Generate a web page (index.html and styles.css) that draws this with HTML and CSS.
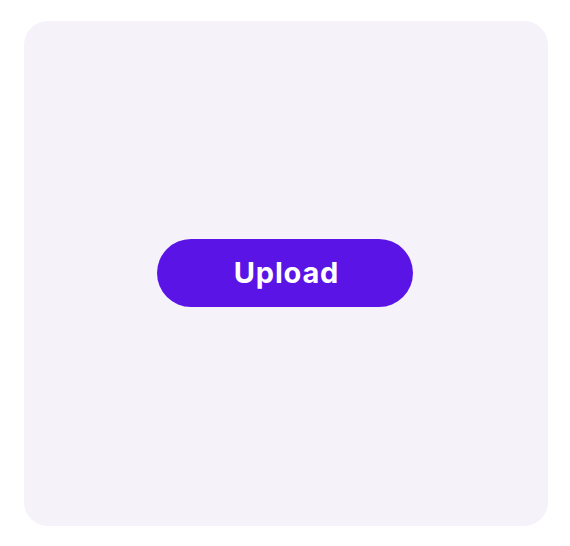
FILE: index.html
```html
<!DOCTYPE html>
<html>
<head>
<meta charset="utf-8">
<link rel="stylesheet" href="styles.css">
</head>
<body>
<div class="card">
  <button class="upload">Upload</button>
</div>
</body>
</html>
```
FILE: styles.css
```css
html, body {
  margin: 0;
  padding: 0;
  background: #ffffff;
}
body {
  padding: 21px 0 0 24px;
}
.card {
  width: 524px;
  height: 505px;
  border-radius: 24px;
  background: #f5f2fa;
  display: flex;
  align-items: center;
  justify-content: center;
}
.upload {
  width: 256px;
  height: 68px;
  border: none;
  border-radius: 34px;
  background: #5a14e6;
  color: #ffffff;
  font-family: Inter, "Noto Sans", sans-serif;
  font-weight: 700;
  font-size: 29px;
  letter-spacing: 0.8px;
  line-height: 1;
  padding: 0 0 0 3px;
  margin: 0 2px 2px 0;
}
```
